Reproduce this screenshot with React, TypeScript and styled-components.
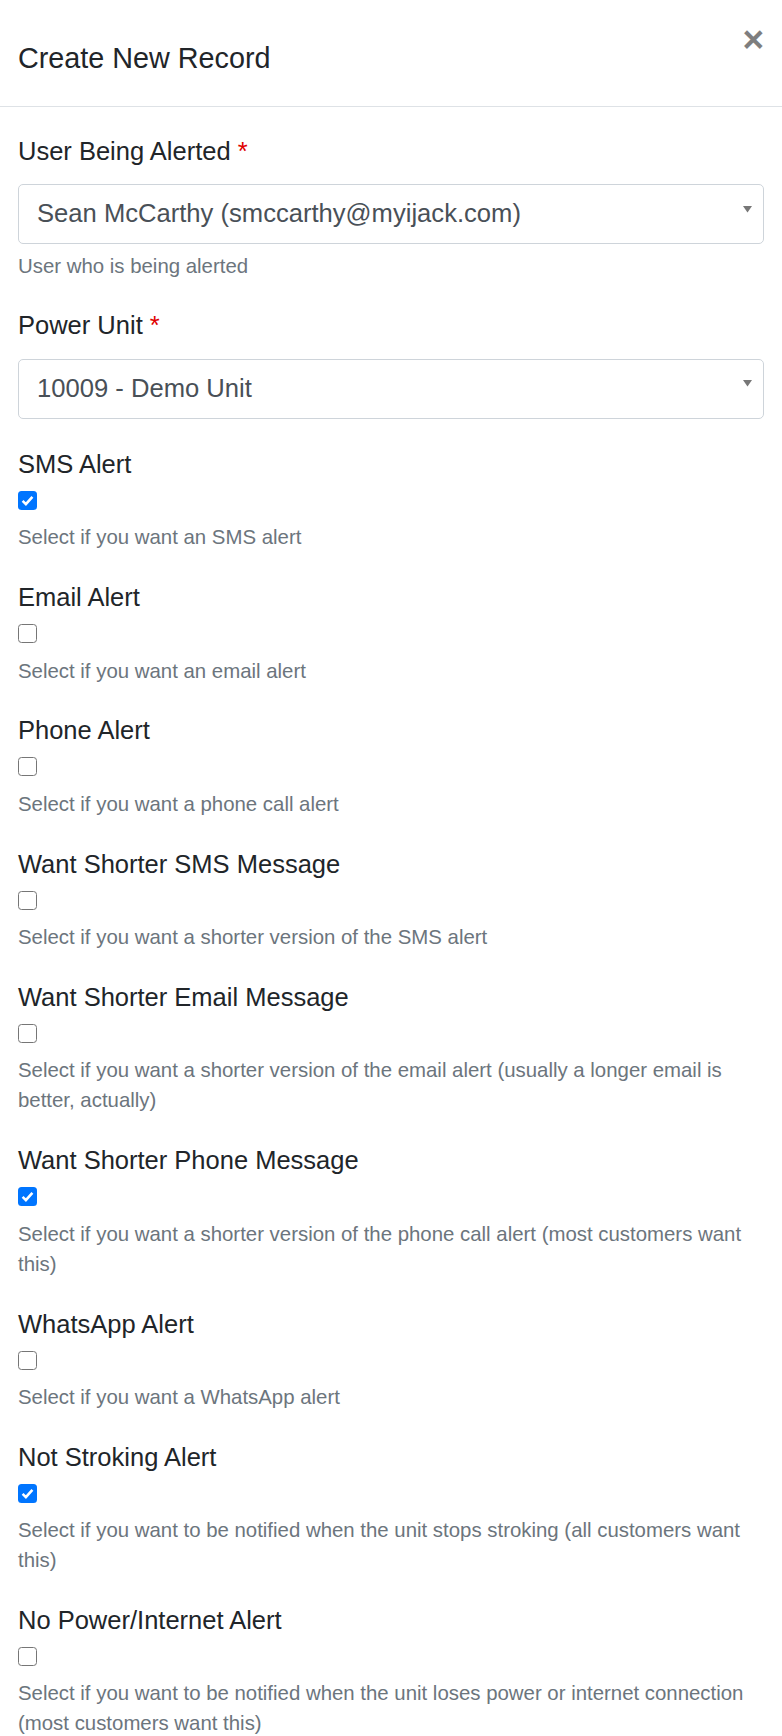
import styled, { createGlobalStyle } from "styled-components";

const GlobalStyle = createGlobalStyle`
  body {
    margin: 0;
    background: #fff;
    font-family: "Liberation Sans", Arial, sans-serif;
    color: #212529;
  }
`;

const Modal = styled.div`
  width: 782px;
  background: #fff;
`;

const Header = styled.div`
  display: flex;
  justify-content: space-between;
  align-items: flex-start;
  padding: 37px 18px 26px;
  border-bottom: 1px solid #dee2e6;
`;

const Title = styled.h5`
  margin: 0;
  font-size: 28.75px;
  line-height: 42.75px;
  font-weight: 400;
  color: #212529;
`;

const CloseButton = styled.button`
  margin-top: -16px;
  padding: 0;
  border: 0;
  background: none;
  font-family: "Liberation Sans", Arial, sans-serif;
  font-size: 37px;
  font-weight: 700;
  line-height: 1;
  color: #000;
  opacity: 0.5;
  cursor: pointer;
`;

const Body = styled.div`
  padding: 26px 18px;
`;

const FormGroup = styled.div`
  margin-bottom: 26.9px;
`;

const Label = styled.div`
  font-size: 25.5px;
  line-height: 37.5px;
  margin-bottom: 7.5px;
`;

const Required = styled.span`
  color: #e00000;
`;

/* sibling margins collapse with the label's 7.5px, so this is the full gap */
const SelectBox = styled.div`
  display: flex;
  justify-content: space-between;
  height: 60px;
  box-sizing: border-box;
  margin-top: 14px;
  padding: 0 11px 0 18px;
  border: 1px solid #ced4da;
  border-radius: 5px;
  font-size: 25.6px;
  line-height: 57px;
  color: #495057;
`;

const Arrow = styled.svg`
  margin-top: 20.5px;
  flex: none;
`;

const CheckRow = styled.div`
  display: flex;
  padding-bottom: 6.1px;
`;

const CheckBox = styled.span<{ $checked: boolean }>`
  display: flex;
  align-items: center;
  justify-content: center;
  width: 19px;
  height: 19px;
  box-sizing: border-box;
  border-radius: 3.5px;
  background: ${(p) => (p.$checked ? "#0075ff" : "#fff")};
  border: ${(p) => (p.$checked ? "none" : "1.4px solid #767676")};
`;

const Helper = styled.div`
  margin-top: 6.3px;
  font-size: 20.4px;
  line-height: 30px;
  color: #6c757d;
`;

type Check = { label: string; help: string; checked: boolean };

const checks: Check[] = [
  { label: "SMS Alert", help: "Select if you want an SMS alert", checked: true },
  { label: "Email Alert", help: "Select if you want an email alert", checked: false },
  { label: "Phone Alert", help: "Select if you want a phone call alert", checked: false },
  {
    label: "Want Shorter SMS Message",
    help: "Select if you want a shorter version of the SMS alert",
    checked: false,
  },
  {
    label: "Want Shorter Email Message",
    help: "Select if you want a shorter version of the email alert (usually a longer email is better, actually)",
    checked: false,
  },
  {
    label: "Want Shorter Phone Message",
    help: "Select if you want a shorter version of the phone call alert (most customers want this)",
    checked: true,
  },
  { label: "WhatsApp Alert", help: "Select if you want a WhatsApp alert", checked: false },
  {
    label: "Not Stroking Alert",
    help: "Select if you want to be notified when the unit stops stroking (all customers want this)",
    checked: true,
  },
  {
    label: "No Power/Internet Alert",
    help: "Select if you want to be notified when the unit loses power or internet connection (most customers want this)",
    checked: false,
  },
];

const Select = ({ value }: { value: string }) => (
  <SelectBox>
    <span>{value}</span>
    <Arrow width="9" height="7" viewBox="0 0 9 7">
      <path d="M0 0 H9 L4.5 6.5 Z" fill="#777" />
    </Arrow>
  </SelectBox>
);

export default function App() {
  return (
    <Modal>
      <GlobalStyle />
      <Header>
        <Title>Create New Record</Title>
        <CloseButton aria-label="Close">×</CloseButton>
      </Header>
      <Body>
        <FormGroup>
          <Label>
            User Being Alerted <Required>*</Required>
          </Label>
          <Select value="Sean McCarthy (smccarthy@myijack.com)" />
          <Helper>User who is being alerted</Helper>
        </FormGroup>
        <FormGroup>
          <Label>
            Power Unit <Required>*</Required>
          </Label>
          <Select value="10009 - Demo Unit" />
        </FormGroup>
        {checks.map((c) => (
          <FormGroup key={c.label}>
            <Label>{c.label}</Label>
            <CheckRow>
              <CheckBox $checked={c.checked}>
                {c.checked && (
                  <svg width="19" height="19" viewBox="0 0 19 19">
                    <path
                      d="M4.6 9.9 L7.9 13.1 L14.4 5.9"
                      fill="none"
                      stroke="#fff"
                      strokeWidth="2.6"
                    />
                  </svg>
                )}
              </CheckBox>
            </CheckRow>
            <Helper>{c.help}</Helper>
          </FormGroup>
        ))}
      </Body>
    </Modal>
  );
}
